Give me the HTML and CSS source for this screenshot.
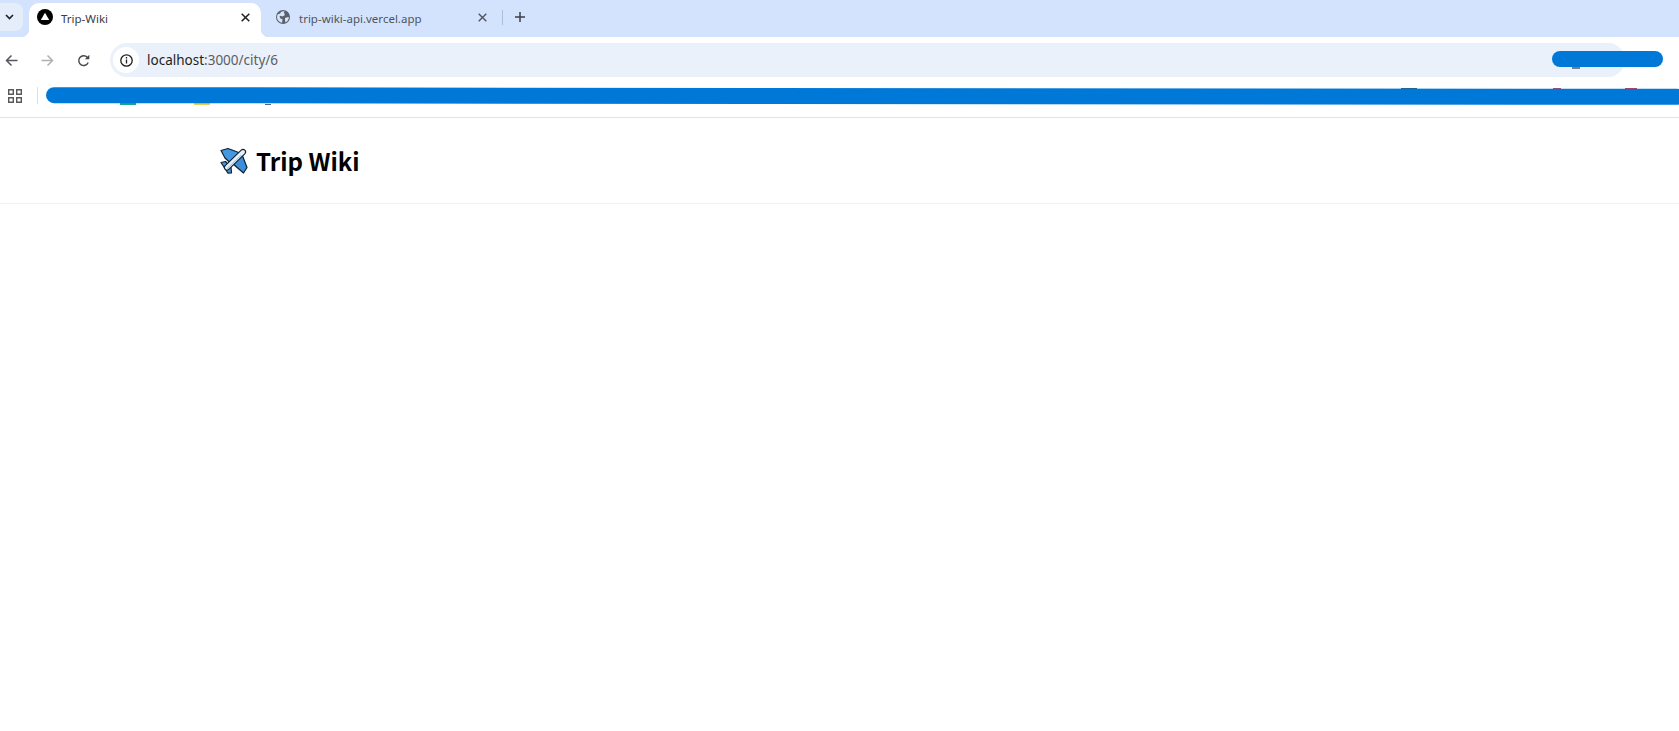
FILE: index.html
```html
<!DOCTYPE html>
<html lang="en">
<head>
<meta charset="utf-8">
<title>Trip-Wiki</title>
<link rel="stylesheet" href="styles.css">
</head>
<body>
<div class="browser">
  <div class="tabstrip">
    <div class="tabsearch">
      <svg width="9" height="6" viewBox="0 0 9 6"><path d="M1 1l3.500 3.500L8 1" fill="none" stroke="#1f2328" stroke-width="1.700"/></svg>
    </div>
    <div class="tab active">
      <svg class="favicon" width="16" height="16" viewBox="0 0 16 16"><circle cx="8" cy="8" r="8" fill="#000"/><path d="M8 3.800 12.200 11H3.800z" fill="#fff"/></svg>
      <span class="tabtitle">Trip-Wiki</span>
      <svg class="close" width="9" height="9" viewBox="0 0 9 9"><path d="M.7.700l7.600 7.600M8.300.700.7 8.300" stroke="#1f1f1f" stroke-width="1.500"/></svg>
    </div>
    <div class="tab second">
      <svg class="favicon" width="14" height="14" viewBox="0 0 14 14"><circle cx="7" cy="7" r="7" fill="#5b6068"/><path d="M1.500 4.500 4 3.500 5.500 1.500l3-.2L8 3 9 5 6.500 6.500 4.500 5.800 3.500 6.500 4.500 8.500l2 .8-.4 3.500C3.500 12.500 1 10 1 7zM9 8l3.200-1 .8.800-1.300 3L9.500 12.500 9 10.500z" fill="#d3e3fd"/></svg>
      <span class="tabtitle dim">trip-wiki-api.vercel.app</span>
      <svg class="close" width="9" height="9" viewBox="0 0 9 9"><path d="M.7.700l7.600 7.600M8.300.700.7 8.300" stroke="#50555c" stroke-width="1.400"/></svg>
    </div>
    <div class="tabdivider"></div>
    <svg class="newtab" width="10" height="10" viewBox="0 0 10 10"><path d="M5 0v10M0 5h10" stroke="#3c4043" stroke-width="1.500"/></svg>
  </div>

  <div class="toolbar">
    <svg class="navicon" width="13" height="13" viewBox="0 0 13 13"><path d="M12.500 6.500H1.500M6.500 1.500l-5 5 5 5" fill="none" stroke="#55585c" stroke-width="1.500"/></svg>
    <svg class="navicon" width="13" height="13" viewBox="0 0 13 13"><path d="M.5 6.500h11M6.500 1.500l5 5-5 5" fill="none" stroke="#aeb0b3" stroke-width="1.500"/></svg>
    <svg class="navicon last" width="13" height="13" viewBox="0 0 13 13"><path d="M11.200 8.500A4.900 4.900 0 1 1 10.300 3.300L11.500 4.500" fill="none" stroke="#474747" stroke-width="1.400"/><path d="M12.300.8v4.500H7.800z" fill="#474747"/></svg>
    <div class="omnibox">
      <div class="siteinfo">
        <svg width="13" height="13" viewBox="0 0 13 13"><circle cx="6.500" cy="6.500" r="5.700" fill="none" stroke="#1f1f1f" stroke-width="1.300"/><path d="M6.500 5.600v3.900M6.500 3v1.500" stroke="#1f1f1f" stroke-width="1.300"/></svg>
      </div>
      <span class="url">localhost<span class="urlpath">:3000/city/6</span></span>
    </div>
  </div>

  <div class="bookmarks">
    <svg class="apps" width="14" height="14" viewBox="0 0 14 14"><path d="M.7.700h4.600v4.600H.7zM8.700.700h4.600v4.600H8.700zM.7 8.700h4.600v4.600H.7zM8.700 8.700h4.600v4.600H8.700z" fill="none" stroke="#55585c" stroke-width="1.400"/></svg>
    <div class="bmdivider"></div>
    <div class="bmhint teal"></div>
    <div class="bmhint yellow"></div>
    <div class="bmhint dot"></div>
  </div>

  <div class="hint hint-a"></div>
  <div class="hint hint-b"></div>
  <div class="hint hint-c"></div>
  <div class="scribble scribble-bar"></div>
  <div class="hint hint-d"></div>
  <div class="scribble scribble-pill"></div>
</div>

<header class="siteheader">
  <div class="brand">
    <svg class="plane" width="28" height="27" viewBox="0 0 28 27">
      <g stroke="#10202e" stroke-width="1.200" stroke-linejoin="round">
        <path d="M1 15.500 5.500 14.500 11 20.500 11.500 25.800 8 26.200 5 21.500z" fill="#4397e3"/>
        <path d="M1 3.500 8 1.500 20 6 11 16.500 5 11z" fill="#4397e3"/>
        <path d="M22 7.500 27 20.500 23.500 26 16.500 20 11 15z" fill="#3d8fdc"/>
      </g>
      <path d="M7 20.500 23 5" stroke="#10202e" stroke-width="6.200" stroke-linecap="round"/>
      <path d="M7 20.500 23 5" stroke="#e6f0f9" stroke-width="4" stroke-linecap="round"/>
      <path d="M7.500 21.300 21 8.300" stroke="#a9c9e6" stroke-width="1.100" stroke-linecap="round"/>
    </svg>
    <span class="brandname">Trip Wiki</span>
  </div>
</header>
</body>
</html>
```

FILE: styles.css
```css
* { box-sizing: border-box; }

html, body {
  margin: 0;
  height: 100%;
  background: #fff;
  overflow: hidden;
}

body {
  font-family: "Noto Sans CJK KR", "Noto Sans", sans-serif;
}

.browser {
  position: relative;
  height: 118px;
  border-bottom: 1px solid #e3e3e3;
}

.tabstrip {
  display: flex;
  align-items: flex-start;
  height: 37px;
  background: #d3e3fd;
}

.tabsearch {
  display: flex;
  align-items: center;
  width: 23px;
  height: 28px;
  margin-top: 3px;
  padding-left: 5px;
  background: #e5edfb;
  border-radius: 0 8px 8px 0;
}

.tab {
  display: flex;
  align-items: center;
  height: 34px;
  margin-top: 3px;
  padding-bottom: 6px;
  font-family: "Noto Sans", sans-serif;
  font-size: 11.500px;
  color: #3c4043;
}

.tab.active {
  position: relative;
  width: 232px;
  margin-left: 6px;
  padding-left: 8px;
  padding-right: 11px;
  background: #fff;
  border-radius: 10px 10px 0 0;
}

.tab.active::before,
.tab.active::after {
  content: "";
  position: absolute;
  bottom: 0;
  width: 8px;
  height: 8px;
}

.tab.active::before {
  left: -8px;
  background: radial-gradient(circle at 0 0, transparent 8px, #fff 8.500px);
}

.tab.active::after {
  right: -8px;
  background: radial-gradient(circle at 100% 0, transparent 8px, #fff 8.500px);
}

.tab.second {
  width: 233px;
  padding-left: 15px;
  padding-right: 7px;
}

.favicon { flex: none; }

.tabtitle {
  flex: 1;
  margin-left: 8px;
  padding-top: 3px;
  white-space: nowrap;
}

.second .tabtitle { margin-left: 9px; }

.tabtitle.dim { color: #50555c; }

.close { flex: none; }

.tabdivider {
  width: 1px;
  height: 15px;
  margin: 10px 0 0 8px;
  background: #a9bfe0;
}

.newtab {
  margin: 12px 0 0 12px;
}

.toolbar {
  display: flex;
  align-items: center;
  height: 43px;
  padding: 3px 0 0 5px;
}

.navicon { flex: none; margin-right: 23px; }
.navicon.last { margin-right: 20px; }

.omnibox {
  display: flex;
  align-items: center;
  width: 1515px;
  height: 34px;
  background: #ebf1fa;
  border-radius: 17px;
}

.siteinfo {
  display: flex;
  align-items: center;
  justify-content: center;
  width: 26px;
  height: 26px;
  margin-left: 3px;
  background: #fff;
  border-radius: 50%;
}

.url {
  margin-left: 8px;
  font-family: "Noto Sans", sans-serif;
  font-size: 13.500px;
  color: #1f1f1f;
}

.urlpath { color: #5a5e63; }

.bookmarks {
  display: flex;
  align-items: center;
  height: 37px;
  padding: 0 0 6px 8px;
}

.apps { flex: none; }

.bmdivider {
  width: 1px;
  height: 17px;
  margin-left: 15px;
  background: #d5e2f3;
}

.bmhint {
  align-self: flex-end;
  height: 2px;
  margin-bottom: 6px;
}

.bmhint.teal { width: 16px; margin-left: 82px; background: #14a98e; }
.bmhint.yellow { width: 16px; margin-left: 58px; background: #e6cf4a; }
.bmhint.dot { width: 6px; margin-left: 55px; height: 1px; background: #4a6a80; }

.scribble {
  position: absolute;
  background: #0078d7;
}

.scribble-bar {
  left: 46px;
  right: -6px;
  top: 88px;
  height: 16px;
  border-radius: 8px;
  transform: rotate(0.06deg);
}

.scribble-pill {
  left: 1552px;
  top: 51px;
  width: 111px;
  height: 16px;
  border-radius: 8px;
}

.hint {
  position: absolute;
  height: 2px;
}

.hint-a { left: 1401px; top: 88px; width: 16px; background: #2a5f7a; }
.hint-b { left: 1553px; top: 88px; width: 8px; background: #b5475c; }
.hint-c { left: 1625px; top: 88px; width: 12px; background: #c8384f; }
.hint-d { left: 1572px; top: 66px; width: 8px; height: 3px; background: #7a7e83; }

.siteheader {
  display: flex;
  align-items: center;
  height: 86px;
  padding-left: 220px;
  border-bottom: 1px solid #f1f1f1;
}

.brand {
  display: flex;
  align-items: center;
  gap: 8px;
}

.plane { flex: none; }

.brandname {
  font-size: 24px;
  font-weight: 700;
  color: #000;
  line-height: 1;
}
```
